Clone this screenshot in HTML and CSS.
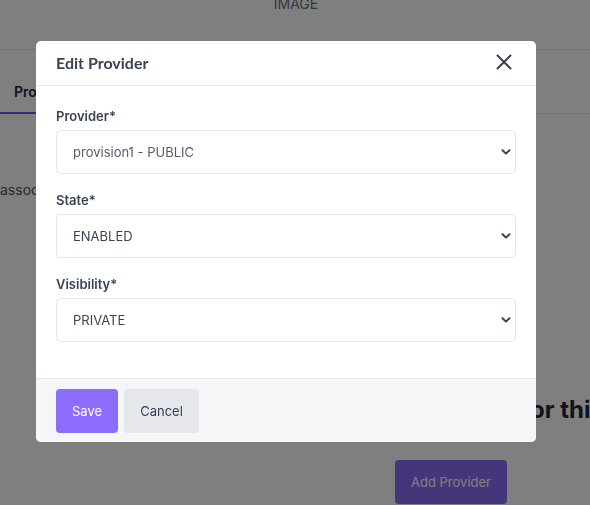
FILE: index.html
```html
<!DOCTYPE html>
<html lang="en">
<head>
<meta charset="utf-8">
<title>Edit Provider</title>
<link rel="stylesheet" href="styles.css">
</head>
<body>
<div class="page">
  <div class="topbar"><span class="topbar-title">IMAGE</span></div>
  <div class="tabs">
    <div class="tab">Providers</div>
  </div>
  <p class="hint">associated with this image.</p>
  <h2 class="empty-title">for this image</h2>
  <div class="empty-actions"><button class="btn btn-add" type="button">Add Provider</button></div>
</div>

<div class="overlay"></div>

<div class="modal" role="dialog" aria-labelledby="modal-title">
  <div class="modal-header">
    <h3 class="modal-title" id="modal-title">Edit Provider</h3>
    <button class="close-btn" type="button" aria-label="Close">
      <svg width="24" height="24" viewBox="0 0 24 24" fill="none" stroke="#374151" stroke-width="2" stroke-linecap="round"><path d="M5.5 5.5L18.5 18.5M18.5 5.5L5.5 18.5"/></svg>
    </button>
  </div>
  <div class="modal-body">
    <div class="field">
      <label class="field-label" for="provider">Provider*</label>
      <div class="select-wrap">
        <select id="provider" class="select"><option>provision1 - PUBLIC</option></select>
        <svg class="chevron" width="10" height="6" viewBox="0 0 10 6" fill="none" stroke="#374151" stroke-width="2" stroke-linecap="round" stroke-linejoin="round"><path d="M1.5 1.2L5 4.6L8.5 1.2"/></svg>
      </div>
    </div>
    <div class="field">
      <label class="field-label" for="state">State*</label>
      <div class="select-wrap">
        <select id="state" class="select select-dark"><option>ENABLED</option></select>
        <svg class="chevron" width="10" height="6" viewBox="0 0 10 6" fill="none" stroke="#374151" stroke-width="2" stroke-linecap="round" stroke-linejoin="round"><path d="M1.5 1.2L5 4.6L8.5 1.2"/></svg>
      </div>
    </div>
    <div class="field">
      <label class="field-label" for="visibility">Visibility*</label>
      <div class="select-wrap">
        <select id="visibility" class="select select-dark"><option>PRIVATE</option></select>
        <svg class="chevron" width="10" height="6" viewBox="0 0 10 6" fill="none" stroke="#374151" stroke-width="2" stroke-linecap="round" stroke-linejoin="round"><path d="M1.5 1.2L5 4.6L8.5 1.2"/></svg>
      </div>
    </div>
  </div>
  <div class="modal-footer">
    <button class="btn btn-save" type="button">Save</button>
    <button class="btn btn-cancel" type="button">Cancel</button>
  </div>
</div>
</body>
</html>
```
FILE: styles.css
```css
* { box-sizing: border-box; }
html, body { margin: 0; padding: 0; }
body {
  width: 590px;
  height: 505px;
  overflow: hidden;
  background: #ffffff;
  font-family: Inter, "Noto Sans", sans-serif;
  color: #374151;
}

/* background page */
.page { width: 590px; height: 505px; overflow: hidden; }
.topbar {
  height: 50px;
  border-bottom: 1px solid #e5e7eb;
  display: flex;
  justify-content: center;
}
.topbar-title {
  margin-top: -6px;
  margin-left: 2px;
  font-size: 14px;
  line-height: 20px;
  color: #6b7280;
}
.tabs {
  display: flex;
  margin-top: 30px;
  border-bottom: 1px solid #e5e7eb;
}
.tab {
  padding: 2px 14px 10px;
  font-size: 14px;
  font-weight: 600;
  line-height: 20px;
  color: #1f2937;
  border-bottom: 2px solid #7350ee;
  margin-bottom: -1px;
}
.hint {
  margin: 66px 0 0;
  font-size: 14px;
  line-height: 20px;
  color: #4b5563;
  white-space: nowrap;
}
.empty-title {
  margin: 194px 0 0;
  padding-left: 521px;
  font-size: 24px;
  line-height: 32px;
  font-weight: 700;
  color: #1f2937;
  white-space: nowrap;
}
.empty-actions {
  margin-top: 34px;
  padding-left: 395px;
}

.btn {
  height: 44px;
  padding: 0 16px;
  border: 0;
  border-radius: 4px;
  font-family: Inter, "Noto Sans", sans-serif;
  font-size: 13px;
  line-height: 20px;
  cursor: pointer;
}
.btn-add { width: 112px; background: #8b6cf7; color: #ffffff; }

.overlay {
  position: fixed;
  inset: 0;
  background: rgba(0, 0, 0, 0.5);
}

/* modal */
.modal {
  position: fixed;
  left: 36px;
  top: 41px;
  width: 500px;
  background: #ffffff;
  border-radius: 5px;
  overflow: hidden;
}
.modal-header {
  height: 45px;
  padding: 0 20px;
  display: flex;
  align-items: center;
  justify-content: space-between;
  border-bottom: 1px solid #e5e7eb;
}
.modal-title {
  margin: 0;
  font-family: Lato, "Noto Sans", sans-serif;
  font-size: 16px;
  font-weight: 700;
  line-height: 20px;
  color: #3b4455;
}
.close-btn {
  width: 24px;
  height: 24px;
  padding: 0;
  border: 0;
  background: transparent;
  display: flex;
  margin-top: -2px;
}
.modal-body { padding: 20px 20px 20px; }
.field { margin-bottom: 16px; }
.field-label {
  display: block;
  margin-bottom: 4px;
  font-size: 13px;
  font-weight: 600;
  line-height: 20px;
  color: #3b4455;
}
.select-wrap { position: relative; }
.select {
  display: block;
  width: 100%;
  height: 44px;
  padding: 0 30px 0 16px;
  border: 1px solid #e5e7eb;
  border-radius: 4px;
  background: #ffffff;
  font-family: Inter, "Noto Sans", sans-serif;
  font-size: 13px;
  color: #555d6b;
  -webkit-appearance: none;
  appearance: none;
  outline: none;
}
.select-dark { color: #3b4455; }
.chevron {
  position: absolute;
  right: 5px;
  top: 19px;
  pointer-events: none;
}
.modal-footer {
  display: flex;
  gap: 6px;
  padding: 10px 20px 9px;
  background: #f5f6f8;
  border-top: 1px solid #e5e7eb;
}
.btn-save { background: #8b6cfb; color: #ffffff; width: 62px; }
.btn-cancel { background: #e6e7ec; color: #374151; width: 75px; }
```
